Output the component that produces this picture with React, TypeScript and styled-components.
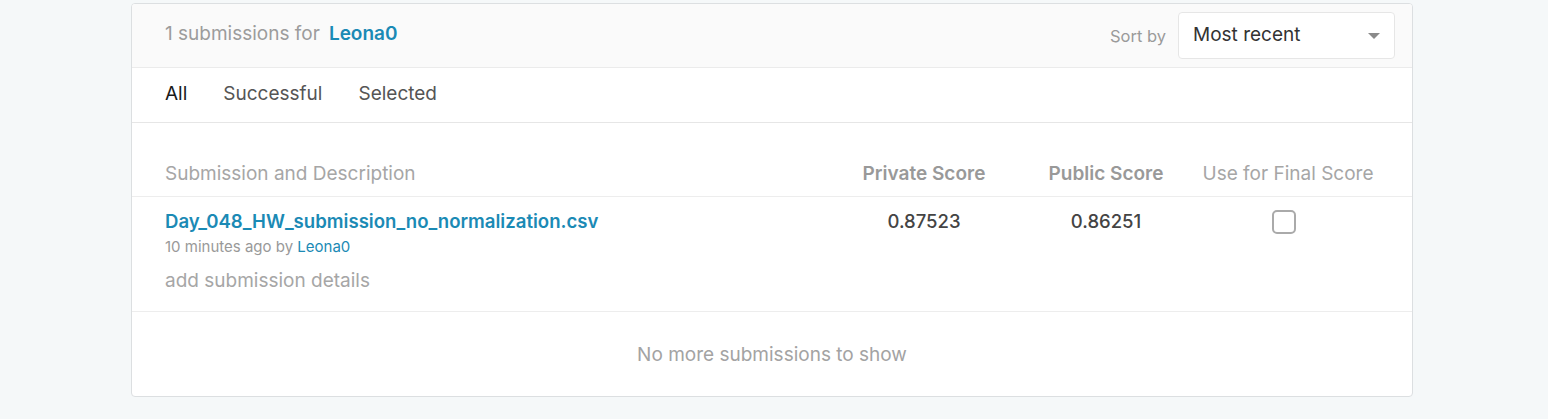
import React from "react";
import styled, { createGlobalStyle } from "styled-components";

const Global = createGlobalStyle`
  html, body { margin: 0; padding: 0; background: #f5f8f9; }
  body { font-family: Inter, "Noto Sans", sans-serif; }
`;

const Page = styled.div`
  padding: 3px 0 0 131px;
  width: 1282px;
`;

const Card = styled.div`
  background: #fff;
  border: 1px solid #dcdfe1;
  border-radius: 4px;
  overflow: hidden;
`;

const Header = styled.div`
  display: flex;
  align-items: center;
  justify-content: space-between;
  height: 63px;
  padding: 0 17px 0 33px;
  background: #fafafa;
  border-bottom: 1px solid #ebebeb;
`;

const Title = styled.div`
  font-size: 19px;
  color: #9c9c9c;
  display: flex;
  gap: 9px;
  align-items: baseline;
  padding-bottom: 4px;
`;

const Link = styled.a<{ $size?: number; $bold?: boolean }>`
  color: #1b8ab5;
  text-decoration: none;
  font-size: ${(p) => p.$size ?? 19}px;
  font-weight: ${(p) => (p.$bold ? 600 : 400)};
`;

const SortWrap = styled.div`
  display: flex;
  align-items: center;
  gap: 12px;
`;

const SortLabel = styled.span`
  font-size: 16.5px;
  color: #9a9a9a;
`;

const Select = styled.div`
  width: 217px;
  height: 47px;
  box-sizing: border-box;
  border: 1px solid #e6e6e6;
  border-radius: 4px;
  background: #fff;
  display: flex;
  align-items: center;
  justify-content: space-between;
  padding: 0 14px 2px 14px;
  font-size: 19px;
  color: #333;
`;

const Caret = styled.span`
  width: 0;
  height: 0;
  margin-top: 2px;
  border-left: 6px solid transparent;
  border-right: 6px solid transparent;
  border-top: 6px solid #8a8a8a;
`;

const Tabs = styled.div`
  display: flex;
  align-items: center;
  gap: 36px;
  height: 55px;
  box-sizing: border-box;
  padding: 0 33px 4px;
  border-bottom: 1px solid #e6e6e6;
`;

const Tab = styled.span<{ $active?: boolean }>`
  font-size: 19px;
  color: ${(p) => (p.$active ? "#1a1a1a" : "#555")};
`;

const Grid = styled.div<{ $head?: boolean }>`
  display: grid;
  grid-template-columns: 1fr 182px 182px 182px;
  padding: ${(p) => (p.$head ? "40px 33px 11px 33px" : "12px 33px 18px 33px")};
  align-items: ${(p) => (p.$head ? "center" : "start")};
  border-bottom: 1px solid #ededed;
`;

const HeadCell = styled.div<{ $center?: boolean; $bold?: boolean }>`
  font-size: 19px;
  color: ${(p) => (p.$bold ? "#999" : "#a6a6a6")};
  font-weight: ${(p) => (p.$bold ? 600 : 400)};
  text-align: ${(p) => (p.$center ? "center" : "left")};
  line-height: 22px;
`;

const Desc = styled.div`
  display: flex;
  flex-direction: column;
`;

const TitleLink = styled(Link)`
  line-height: 24px;
`;

const Meta = styled.div`
  font-size: 15px;
  line-height: 20px;
  color: #999;
  margin-top: 4px;
`;

const Details = styled.div`
  font-size: 19px;
  line-height: 24px;
  color: #a6a6a6;
  margin-top: 12px;
`;

const Score = styled.div`
  font-size: 18.5px;
  font-weight: 500;
  color: #444;
  text-align: center;
  line-height: 24px;
`;

const CheckCell = styled.div`
  display: flex;
  justify-content: center;
  padding: 1px 8px 0 0;
`;

const Checkbox = styled.span`
  width: 24px;
  height: 24px;
  box-sizing: border-box;
  border: 2px solid #aaa;
  border-radius: 5px;
`;

const Footer = styled.div`
  height: 84px;
  display: flex;
  align-items: center;
  justify-content: center;
  font-size: 19px;
  color: #a3a3a3;
`;

export default function App() {
  return (
    <>
      <Global />
      <Page>
        <Card>
          <Header>
            <Title>
              1 submissions for <Link $bold>Leona0</Link>
            </Title>
            <SortWrap>
              <SortLabel>Sort by</SortLabel>
              <Select>
                Most recent
                <Caret />
              </Select>
            </SortWrap>
          </Header>
          <Tabs>
            <Tab $active>All</Tab>
            <Tab>Successful</Tab>
            <Tab>Selected</Tab>
          </Tabs>
          <Grid $head>
            <HeadCell>Submission and Description</HeadCell>
            <HeadCell $center $bold>Private Score</HeadCell>
            <HeadCell $center $bold>Public Score</HeadCell>
            <HeadCell $center>Use for Final Score</HeadCell>
          </Grid>
          <Grid>
            <Desc>
              <TitleLink $size={18.6} $bold>Day_048_HW_submission_no_normalization.csv</TitleLink>
              <Meta>
                10 minutes ago by <Link $size={15}>Leona0</Link>
              </Meta>
              <Details>add submission details</Details>
            </Desc>
            <Score>0.87523</Score>
            <Score>0.86251</Score>
            <CheckCell>
              <Checkbox />
            </CheckCell>
          </Grid>
          <Footer>No more submissions to show</Footer>
        </Card>
      </Page>
    </>
  );
}
